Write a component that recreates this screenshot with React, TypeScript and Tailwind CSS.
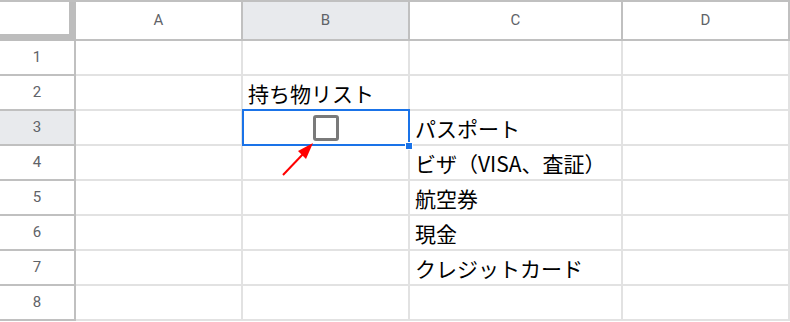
const cols = [
  { key: 'A', width: 'w-[167px]' },
  { key: 'B', width: 'w-[167px]' },
  { key: 'C', width: 'w-[213px]' },
  { key: 'D', width: 'w-[167px]' },
];

const cellText: Record<string, string> = {
  B2: '持ち物リスト',
  C3: 'パスポート',
  C4: 'ビザ（VISA、査証）',
  C5: '航空券',
  C6: '現金',
  C7: 'クレジットカード',
};

const rows = [1, 2, 3, 4, 5, 6, 7, 8];

const Checkbox = () => (
  <div className="w-[26px] h-[26px] border-[3px] border-[#7a7a7a] rounded-[3px] bg-white" />
);

export default function App() {
  return (
    <div
      className="relative w-[790px] h-[322px] bg-white overflow-hidden"
      style={{ fontFamily: 'Roboto, "Noto Sans CJK JP", sans-serif' }}
    >
      {/* column headers */}
      <div className="flex h-[41px] border-t-2 border-[#c0c0c0]">
        <div className="w-[76px] h-full bg-white border-r-[7px] border-b-[7px] border-[#bdbdbd]" />
        {cols.map((c) => (
          <div
            key={c.key}
            className={`${c.width} h-full flex items-center justify-center border-r-2 border-b-2 border-[#c0c0c0] text-[15px] text-[#5f6368] ${
              c.key === 'B' ? 'bg-[#e8eaed]' : 'bg-white'
            }`}
          >
            {c.key}
          </div>
        ))}
      </div>

      {rows.map((r) => (
        <div key={r} className="flex h-[35px]">
          <div
            className={`w-[76px] h-full flex items-center justify-center border-r-2 border-b-2 border-[#c0c0c0] text-[15px] text-[#5f6368] ${
              r === 3 ? 'bg-[#e8eaed]' : 'bg-white'
            }`}
          >
            {r}
          </div>
          {cols.map((c) => {
            const id = `${c.key}${r}`;
            return (
              <div
                key={id}
                className={`${c.width} relative h-full flex items-end pl-[5px] pb-[2px] border-r-2 border-b-2 border-[#e2e2e2] text-[21px] leading-[28px] text-black whitespace-nowrap ${
                  id === 'B3' ? 'z-10' : ''
                }`}
                style={{ fontFamily: '"Noto Sans CJK JP", sans-serif' }}
              >
                {cellText[id]}
                {id === 'B3' && (
                  <>
                    <div className="absolute inset-0 flex items-center justify-center">
                      <Checkbox />
                    </div>
                    {/* selection */}
                    <div className="absolute -left-[1px] -top-[2px] w-[168px] h-[37px] border-2 border-[#1a73e8]" />
                    <div className="absolute left-[162px] top-[31px] w-[8px] h-[8px] bg-[#1a73e8] border border-white" />
                  </>
                )}
              </div>
            );
          })}
        </div>
      ))}

      {/* red arrow */}
      <svg className="absolute left-0 top-0 z-20" width="790" height="322">
        <line x1="283" y1="175" x2="304" y2="153" stroke="#ff0000" strokeWidth="2" />
        <polygon points="313,143 298,151 306,159" fill="#ff0000" />
      </svg>
    </div>
  );
}
